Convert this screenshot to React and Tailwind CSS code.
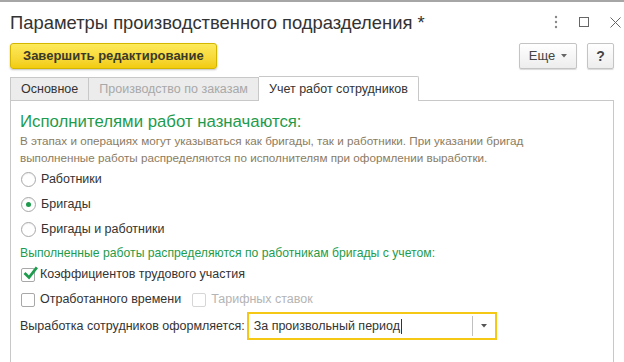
import React from "react";

const Radio = ({ checked, label }) => (
  <div className="flex items-center h-[25px]">
    <span className="w-[15px] h-[15px] rounded-full border border-[#a8a8a8] bg-white flex items-center justify-center ml-[1px] shadow-[inset_0_1px_1px_rgba(0,0,0,0.06)]">
      {checked && <span className="w-[5px] h-[5px] rounded-full bg-[#1e9b4c]" />}
    </span>
    <span className="ml-[5px] text-[12.5px] text-[#333]">{label}</span>
  </div>
);

const Check = ({ checked, disabled, label }) => (
  <div className="flex items-center">
    <span
      className={`relative w-[14px] h-[14px] rounded-[2px] border bg-white ${
        disabled ? "border-[#d6d6d6]" : "border-[#a8a8a8]"
      }`}
    >
      {checked && (
        <svg className="absolute left-[1px] top-[-3px]" width="15" height="15" viewBox="0 0 15 15">
          <path d="M2.5 8 L6 11.5 L13 2.5" fill="none" stroke="#1e9b4c" strokeWidth="2.8" strokeLinecap="square" />
        </svg>
      )}
    </span>
    <span className={`ml-[5px] text-[12.5px] ${disabled ? "text-[#b4b4b4]" : "text-[#333]"}`}>{label}</span>
  </div>
);

export default function App() {
  return (
    <div className="w-[624px] h-[362px] overflow-hidden bg-white border-t-2 border-[#a6a6a6] font-['Liberation_Sans',Arial,sans-serif]">
      {/* title bar */}
      <div className="flex items-center h-[40px] pl-[10px] pr-[3px]">
        <h1 className="text-[18.4px] text-[#333] flex-1 leading-none pt-[3px]">
          Параметры производственного подразделения *
        </h1>
        <div className="flex items-center gap-[21px] text-[#777]">
          <svg width="4" height="14" viewBox="0 0 4 14">
            <circle cx="2" cy="2" r="1.2" fill="#888" />
            <circle cx="2" cy="7" r="1.2" fill="#888" />
            <circle cx="2" cy="12" r="1.2" fill="#888" />
          </svg>
          <span className="w-[10px] h-[10px] border border-[#666]" />
          <svg width="11" height="11" viewBox="0 0 11 11">
            <path d="M0.5 0.5 L10.5 10.5 M10.5 0.5 L0.5 10.5" stroke="#666" strokeWidth="1" />
          </svg>
        </div>
      </div>

      {/* toolbar */}
      <div className="flex items-center justify-between px-[10px] mt-[1px]">
        <button className="h-[26px] px-[12px] rounded-[3px] border border-[#d4b500] bg-gradient-to-b from-[#fdea5a] to-[#f2cc0a] shadow-[0_1px_2px_rgba(0,0,0,0.25)] text-[13px] font-bold text-[#3a3a2a]">
          Завершить редактирование
        </button>
        <div className="flex items-center gap-[10px]">
          <button className="h-[26px] w-[58px] rounded-[2px] border border-[#c4c4c4] bg-gradient-to-b from-white to-[#ededed] shadow-[0_1px_1px_rgba(0,0,0,0.15)] text-[13px] text-[#444] flex items-center justify-center gap-[6px]">
            Еще
            <svg width="6" height="4" viewBox="0 0 6 4">
              <path d="M0 0 L6 0 L3 3.5 Z" fill="#666" />
            </svg>
          </button>
          <button className="h-[26px] w-[27px] rounded-[2px] border border-[#c4c4c4] bg-gradient-to-b from-white to-[#ededed] shadow-[0_1px_1px_rgba(0,0,0,0.15)] text-[14px] font-bold text-[#444]">
            ?
          </button>
        </div>
      </div>

      {/* tabs */}
      <div className="flex items-end ml-[10px] mt-[7px] h-[24px] text-[12.5px]">
        <div className="h-[23px] px-[10px] flex items-center border border-b-0 border-[#c8c8c8] bg-[#ececec] text-[#333]">
          Основное
        </div>
        <div className="h-[23px] px-[10px] flex items-center border border-l-0 border-b-0 border-[#c8c8c8] bg-[#ececec] text-[#a8a8a8]">
          Производство по заказам
        </div>
        <div className="h-[25px] px-[10px] flex items-center border border-l-0 border-b-0 border-[#c8c8c8] bg-white text-[#333] relative top-[1px] rounded-tr-[2px]">
          Учет работ сотрудников
        </div>
      </div>

      {/* panel */}
      <div className="mx-[10px] border border-[#c8c8c8] pl-[9px] pt-[11px] h-[300px]">
        <div className="text-[16.8px] leading-[20px] text-[#1e9b4c]">Исполнителями работ назначаются:</div>
        <p className="text-[11.7px] leading-[17px] text-[#8a7c62] mb-[1px]">
          В этапах и операциях могут указываться как бригады, так и работники. При указании бригад
          <br />
          выполненные работы распределяются по исполнителям при оформлении выработки.
        </p>

        <Radio label="Работники" />
        <Radio checked label="Бригады" />
        <Radio label="Бригады и работники" />

        <div className="mt-[3px] text-[12.2px] leading-[17px] text-[#1e9b4c]">
          Выполненные работы распределяются по работникам бригады с учетом:
        </div>

        <div className="h-[25px] flex items-center pl-[1px]">
          <Check checked label="Коэффициентов трудового участия" />
        </div>
        <div className="h-[25px] flex items-center pl-[1px] gap-[11px]">
          <Check label="Отработанного времени" />
          <Check disabled label="Тарифных ставок" />
        </div>

        <div className="flex items-center">
          <span className="text-[12.5px] text-[#333] mr-[2px]">Выработка сотрудников оформляется:</span>
          <div className="w-[250px] h-[28px] border-2 border-[#f5c816] flex items-center">
            <span className="flex-1 pl-[5px] text-[12.5px] text-[#333] flex items-center">
              За произвольный период
              <span className="inline-block w-[1px] h-[15px] bg-[#333] ml-[1px]" />
            </span>
            <span className="w-[1px] h-[20px] bg-[#c0c0c0]" />
            <span className="w-[22px] flex justify-center">
              <svg width="6" height="4" viewBox="0 0 6 4">
                <path d="M0 0 L6 0 L3 3.5 Z" fill="#555" />
              </svg>
            </span>
          </div>
        </div>
      </div>
    </div>
  );
}
